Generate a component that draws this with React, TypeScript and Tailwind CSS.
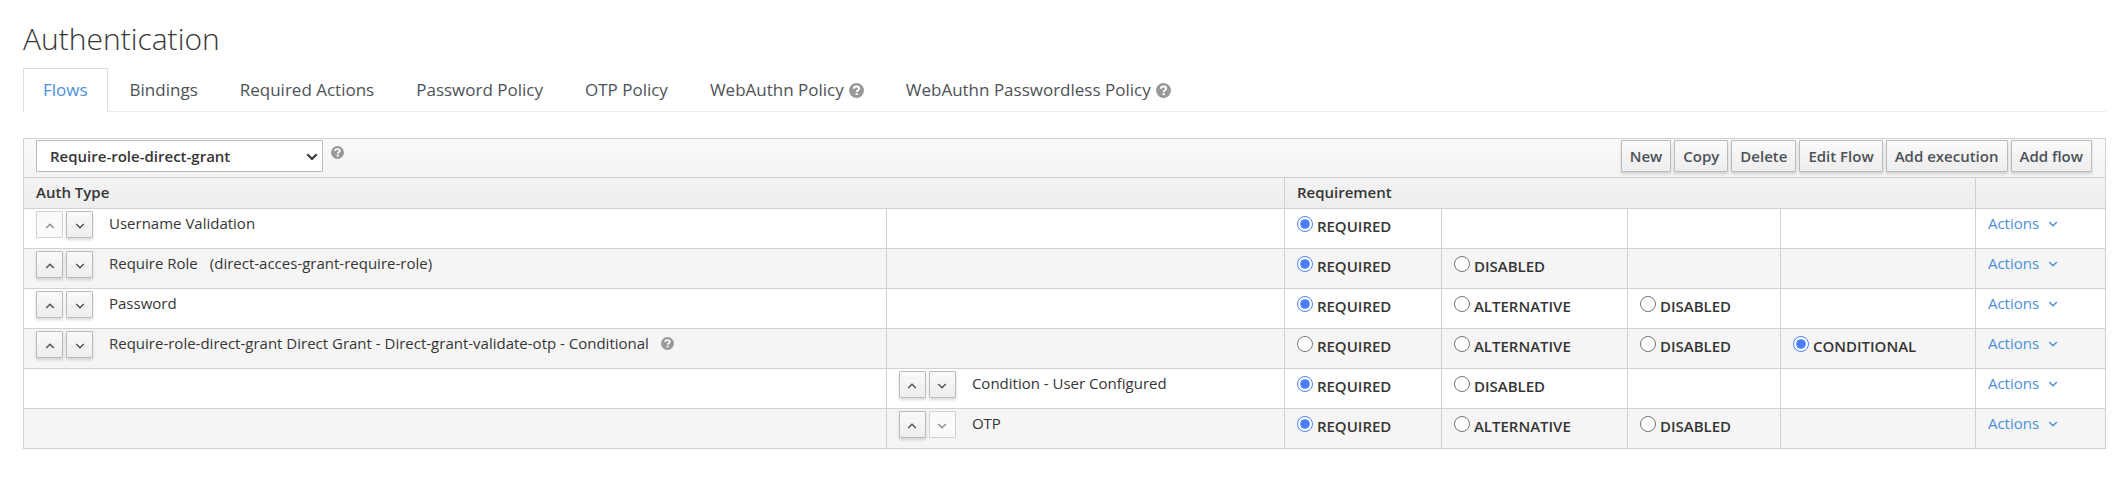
import { useState } from "react";
import { clsx } from "clsx";

type Option = "REQUIRED" | "ALTERNATIVE" | "DISABLED" | "CONDITIONAL";

interface Execution {
  id: string;
  name: string;
  alias?: string;
  help?: boolean;
  level: 0 | 1;
  first?: boolean;
  last?: boolean;
  options: Option[];
  value: Option;
}

const executions: Execution[] = [
  { id: "username", name: "Username Validation", level: 0, first: true, options: ["REQUIRED"], value: "REQUIRED" },
  {
    id: "role",
    name: "Require Role",
    alias: "(direct-acces-grant-require-role)",
    level: 0,
    options: ["REQUIRED", "DISABLED"],
    value: "REQUIRED",
  },
  { id: "password", name: "Password", level: 0, options: ["REQUIRED", "ALTERNATIVE", "DISABLED"], value: "REQUIRED" },
  {
    id: "conditional",
    name: "Require-role-direct-grant Direct Grant - Direct-grant-validate-otp - Conditional",
    help: true,
    level: 0,
    options: ["REQUIRED", "ALTERNATIVE", "DISABLED", "CONDITIONAL"],
    value: "CONDITIONAL",
  },
  {
    id: "configured",
    name: "Condition - User Configured",
    level: 1,
    options: ["REQUIRED", "DISABLED"],
    value: "REQUIRED",
  },
  { id: "otp", name: "OTP", level: 1, last: true, options: ["REQUIRED", "ALTERNATIVE", "DISABLED"], value: "REQUIRED" },
];

const tabs = [
  { label: "Flows" },
  { label: "Bindings" },
  { label: "Required Actions" },
  { label: "Password Policy" },
  { label: "OTP Policy" },
  { label: "WebAuthn Policy", help: true },
  { label: "WebAuthn Passwordless Policy", help: true },
];

const flowButtons = ["New", "Copy", "Delete", "Edit Flow", "Add execution", "Add flow"];

function HelpIcon({ className }: { className: string }) {
  return (
    <svg viewBox="0 0 16 16" className={clsx("shrink-0", className)} aria-hidden="true">
      <circle cx="8" cy="8" r="8" fill="#999999" />
      <path
        d="M5.2 6.2C5.2 4.5 6.4 3.7 8 3.7c1.7 0 2.8.8 2.8 2.2 0 1.9-2.6 1.8-2.6 3.7"
        fill="none"
        stroke="#ffffff"
        strokeWidth="2.1"
      />
      <rect x="7" y="10.7" width="2.4" height="2.2" fill="#ffffff" />
    </svg>
  );
}

function Angle({ up = false, className }: { up?: boolean; className?: string }) {
  return (
    <svg viewBox="0 0 10 6" className={clsx("h-1.5 w-2.5 shrink-0", className)} aria-hidden="true">
      <path
        d={up ? "M1.2 5.1 5 1.3l3.8 3.8" : "M1.2 .9 5 4.7 8.8 .9"}
        fill="none"
        stroke="currentColor"
        strokeWidth="1.4"
      />
    </svg>
  );
}

function MoveButton({ up = false, disabled = false }: { up?: boolean; disabled?: boolean }) {
  return (
    <button
      type="button"
      disabled={disabled}
      aria-label={up ? "Move up" : "Move down"}
      className={clsx(
        "flex size-[27px] items-center justify-center rounded-[1px] border",
        disabled
          ? "border-[#d1d1d1] bg-[#fafafa] text-[#8b8d8f]"
          : "border-[#bbbbbb] bg-linear-to-b from-[#fafafa] to-[#ededed] text-[#4d5258] shadow-[0_2px_3px_rgba(3,3,3,0.15)]",
      )}
    >
      <Angle up={up} className="mt-0.5" />
    </button>
  );
}

function ExecutionName({ item }: { item: Execution }) {
  return (
    <div className="flex items-start pt-0.5 pl-3">
      <div className="flex gap-[3px]">
        <MoveButton up disabled={item.first} />
        <MoveButton disabled={item.last} />
      </div>
      <span className="ml-4">{item.name}</span>
      {item.alias && <span className="ml-3">{item.alias}</span>}
      {item.help && <HelpIcon className="mt-1.5 ml-3 size-[13px]" />}
    </div>
  );
}

function ExecutionRow({ item }: { item: Execution }) {
  const [value, setValue] = useState<Option>(item.value);
  const cell = "h-10 border border-[#d1d1d1] p-0 align-top";
  return (
    <tr className="even:bg-[#f5f5f5]">
      <td className={cell}>{item.level === 0 && <ExecutionName item={item} />}</td>
      <td className={cell}>{item.level === 1 && <ExecutionName item={item} />}</td>
      {[0, 1, 2, 3].map((i) => {
        const option = item.options[i];
        return (
          <td key={i} className={cell}>
            {option && (
              <label className="flex items-start gap-1 pt-[5px] pl-3 font-semibold">
                <input
                  type="radio"
                  name={item.id}
                  checked={value === option}
                  onChange={() => setValue(option)}
                  className="mt-0.5 size-4 accent-[#4a7dff]"
                />
                {option}
              </label>
            )}
          </td>
        );
      })}
      <td className={cell}>
        <a href="#actions" className="flex items-center gap-[9px] pt-0.5 pl-3 text-[#4a90d9]">
          Actions
          <Angle />
        </a>
      </td>
    </tr>
  );
}

export default function App() {
  const head = "h-[31px] border border-[#d1d1d1] px-3 pt-0 pb-0.5 text-left font-semibold";
  return (
    <main className="pr-[7px] pl-[23px] font-['Open_Sans',sans-serif] text-[15px] leading-[25px] text-[#363636]">
      <h1 className="pt-5 text-[30px] leading-[38px] font-light">Authentication</h1>

      <nav className="mt-2.5 flex gap-0.5 border-b border-[#ececec]">
        {tabs.map((tab, i) => (
          <a
            key={tab.label}
            href="#tab"
            className={clsx(
              "-mb-px flex items-center gap-[5px] border px-[19px] py-[7px] text-[17px] leading-7",
              i === 0 ? "border-[#dddddd] border-b-white text-[#4a90d9]" : "border-transparent text-[#4d5258]",
            )}
          >
            {tab.label}
            {tab.help && <HelpIcon className="size-[15px]" />}
          </a>
        ))}
      </nav>

      <table className="mt-[26px] w-full table-fixed border-collapse">
        <colgroup>
          <col />
          <col className="w-[398px]" />
          <col className="w-[157px]" />
          <col className="w-[186px]" />
          <col className="w-[153px]" />
          <col className="w-[195px]" />
          <col className="w-[130px]" />
        </colgroup>
        <thead className="bg-linear-to-b from-[#fafafa] to-[#ededed]">
          <tr>
            <th colSpan={7} className="h-[39px] border border-[#d1d1d1] pt-px pr-[13px] pb-1 pl-3 text-left align-top">
              <div className="flex items-start justify-between">
                <div className="flex items-start gap-2">
                  <div className="grid items-center">
                    <select
                      aria-label="Flow"
                      defaultValue="Require-role-direct-grant"
                      className="col-start-1 row-start-1 h-8 w-[287px] appearance-none rounded-[1px] border border-[#bbbbbb] bg-white px-[13px] font-semibold"
                    >
                      <option>Require-role-direct-grant</option>
                    </select>
                    <svg
                      viewBox="0 0 12 8"
                      className="pointer-events-none col-start-1 row-start-1 mt-0.5 mr-[5px] h-2 w-3 justify-self-end"
                      aria-hidden="true"
                    >
                      <path d="M1.3 1.3 6 6l4.7-4.7" fill="none" stroke="#363636" strokeWidth="2.2" />
                    </svg>
                  </div>
                  <HelpIcon className="mt-1.5 size-[13px]" />
                </div>
                <div className="flex gap-[3px]">
                  {flowButtons.map((label) => (
                    <button
                      key={label}
                      type="button"
                      className="h-8 rounded-[1px] border border-[#bbbbbb] bg-linear-to-b from-[#fafafa] to-[#ededed] px-2 font-semibold text-[#4d5258] shadow-[0_2px_3px_rgba(3,3,3,0.15)]"
                    >
                      {label}
                    </button>
                  ))}
                </div>
              </div>
            </th>
          </tr>
          <tr>
            <th colSpan={2} className={head}>
              Auth Type
            </th>
            <th colSpan={4} className={head}>
              Requirement
            </th>
            <th className={head} aria-label="Actions" />
          </tr>
        </thead>
        <tbody>
          {executions.map((item) => (
            <ExecutionRow key={item.id} item={item} />
          ))}
        </tbody>
      </table>
    </main>
  );
}
